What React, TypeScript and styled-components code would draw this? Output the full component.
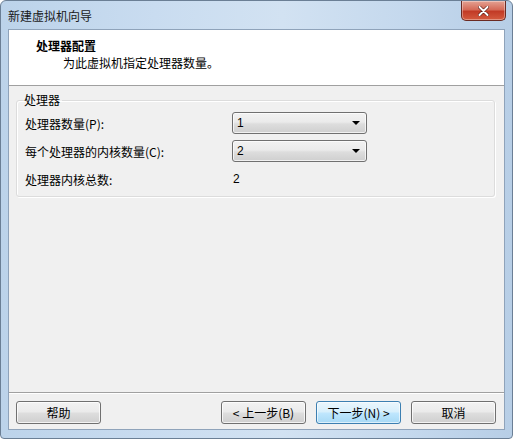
import React from "react";
import styled, { createGlobalStyle } from "styled-components";

const Global = createGlobalStyle`
  html, body { margin: 0; padding: 0; }
  body { width: 513px; height: 439px; overflow: hidden; font-family: "Noto Sans CJK SC", "Noto Sans", sans-serif; font-size: 12px; color: #000; }
`;

const Window = styled.div`
  width: 513px;
  height: 439px;
  box-sizing: border-box;
  border: 1px solid #6b7f95;
  border-radius: 6px 6px 4px 4px;
  background: linear-gradient(90deg, #bcd3ea 0%, #c9dcf0 30%, #d2e2f2 55%, #c4d8ed 80%, #b7cee6 100%);
  display: flex;
  flex-direction: column;
  overflow: hidden;
`;

const TitleBar = styled.div`
  height: 28px;
  flex: none;
  display: flex;
  align-items: flex-start;
  justify-content: space-between;
  padding-left: 7px;
  padding-right: 6px;
`;

const Title = styled.div`
  margin-top: 7px;
  font-size: 12px;
  line-height: 16px;
  color: #1a1a1a;
`;

const Close = styled.div`
  width: 45px;
  height: 20px;
  box-sizing: border-box;
  border: 1px solid #6a2a22;
  border-top: none;
  border-radius: 0 0 5px 5px;
  background: linear-gradient(180deg, #e4a293 0%, #d56b58 45%, #c23b26 55%, #d45b3f 100%);
  display: flex;
  align-items: center;
  justify-content: center;
  box-shadow: inset 0 0 0 1px rgba(255,255,255,0.35);
`;

const Client = styled.div`
  flex: 1;
  margin: 0 7px 8px 7px;
  border: 1px solid #8fa3ba;
  background: #f0f0f0;
  display: flex;
  flex-direction: column;
`;

const Header = styled.div`
  height: 56px;
  flex: none;
  background: #fff;
  border-bottom: 1px solid #a0a0a0;
  box-sizing: border-box;
  display: flex;
  flex-direction: column;
  align-items: flex-start;
`;

const HeaderTitle = styled.div`
  margin: 7px 0 0 27px;
  font-weight: bold;
  font-size: 12px;
  line-height: 17px;
`;

const HeaderSub = styled.div`
  margin-left: 54px;
  font-size: 12px;
  line-height: 17px;
`;

const Body = styled.div`
  flex: 1;
  padding: 7px 9px 0 7px;
`;

const Group = styled.fieldset`
  margin: 0;
  border: 1px solid #dcdcdc;
  border-radius: 3px;
  box-shadow: inset 1px 1px 0 #fff, 1px 1px 0 #fff;
  padding: 0 0 0 8px;
  height: 104px;
  box-sizing: border-box;
`;

const Legend = styled.legend`
  padding: 0 2px 0 0;
  margin-left: -1px;
  font-size: 12px;
  line-height: 14px;
`;

const Row = styled.div`
  display: flex;
  align-items: center;
  height: 28px;
  &:first-of-type {
    margin-top: 2px;
  }
`;

const Label = styled.div`
  width: 207px;
  flex: none;
  font-size: 12px;
`;

const Combo = styled.div`
  width: 135px;
  height: 22px;
  box-sizing: border-box;
  border: 1px solid #707070;
  border-radius: 3px;
  background: linear-gradient(180deg, #f2f2f2 0%, #ebebeb 45%, #dddddd 55%, #cfcfcf 100%);
  box-shadow: inset 0 0 0 1px rgba(255,255,255,0.7);
  display: flex;
  align-items: center;
  justify-content: space-between;
  padding: 0 6px 0 4px;
  font-size: 12px;
  font-family: "Liberation Sans", "Noto Sans CJK SC", sans-serif;
`;

const Arrow = styled.div`
  width: 0;
  height: 0;
  border-left: 4px solid transparent;
  border-right: 4px solid transparent;
  border-top: 4px solid #000;
`;

const Value = styled.div`
  font-family: "Liberation Sans", sans-serif;
  font-size: 12px;
  padding-left: 1px;
`;

const Footer = styled.div`
  flex: none;
  border-top: 1px solid #a0a0a0;
  box-shadow: inset 0 1px 0 #fff;
  height: 37px;
  display: flex;
  align-items: flex-start;
  padding: 8px 8px 0 7px;
  box-sizing: border-box;
`;

const Spacer = styled.div`
  flex: 1;
`;

const Button = styled.button<{ $default?: boolean; $gap?: number }>`
  width: 85px;
  height: 23px;
  margin-left: ${(p) => p.$gap ?? 0}px;
  box-sizing: border-box;
  border: 1px solid ${(p) => (p.$default ? "#3c7fb1" : "#707070")};
  border-radius: 3px;
  background: ${(p) =>
    p.$default
      ? "linear-gradient(180deg, #eaf6fd 0%, #d9f0fc 45%, #bee6fd 55%, #a7d9f5 100%)"
      : "linear-gradient(180deg, #f2f2f2 0%, #ebebeb 45%, #dddddd 55%, #cfcfcf 100%)"};
  box-shadow: inset 0 0 0 1px ${(p) => (p.$default ? "rgba(255,255,255,0.6)" : "rgba(255,255,255,0.75)")};
  font-family: "Noto Sans CJK SC", "Liberation Sans", sans-serif;
  font-size: 12px;
  color: #000;
  padding: 0;
  display: flex;
  align-items: center;
  justify-content: center;
`;

export default function App() {
  return (
    <>
      <Global />
      <Window>
        <TitleBar>
          <Title>新建虚拟机向导</Title>
          <Close>
            <svg width="11" height="10" viewBox="0 0 11 10">
              <path d="M1.5 1 L9.5 9 M9.5 1 L1.5 9" stroke="#5a1a12" strokeWidth="3.2" strokeLinecap="round" />
              <path d="M1.5 1 L9.5 9 M9.5 1 L1.5 9" stroke="#fff" strokeWidth="2" strokeLinecap="round" />
            </svg>
          </Close>
        </TitleBar>
        <Client>
          <Header>
            <HeaderTitle>处理器配置</HeaderTitle>
            <HeaderSub>为此虚拟机指定处理器数量。</HeaderSub>
          </Header>
          <Body>
            <Group>
              <Legend>处理器</Legend>
              <Row>
                <Label>处理器数量(P):</Label>
                <Combo>
                  <span>1</span>
                  <Arrow />
                </Combo>
              </Row>
              <Row>
                <Label>每个处理器的内核数量(C):</Label>
                <Combo>
                  <span>2</span>
                  <Arrow />
                </Combo>
              </Row>
              <Row>
                <Label>处理器内核总数:</Label>
                <Value>2</Value>
              </Row>
            </Group>
          </Body>
          <Footer>
            <Button>帮助</Button>
            <Spacer />
            <Button>&lt; 上一步(B)</Button>
            <Button $default $gap={10}>下一步(N) &gt;</Button>
            <Button $gap={10}>取消</Button>
          </Footer>
        </Client>
      </Window>
    </>
  );
}
